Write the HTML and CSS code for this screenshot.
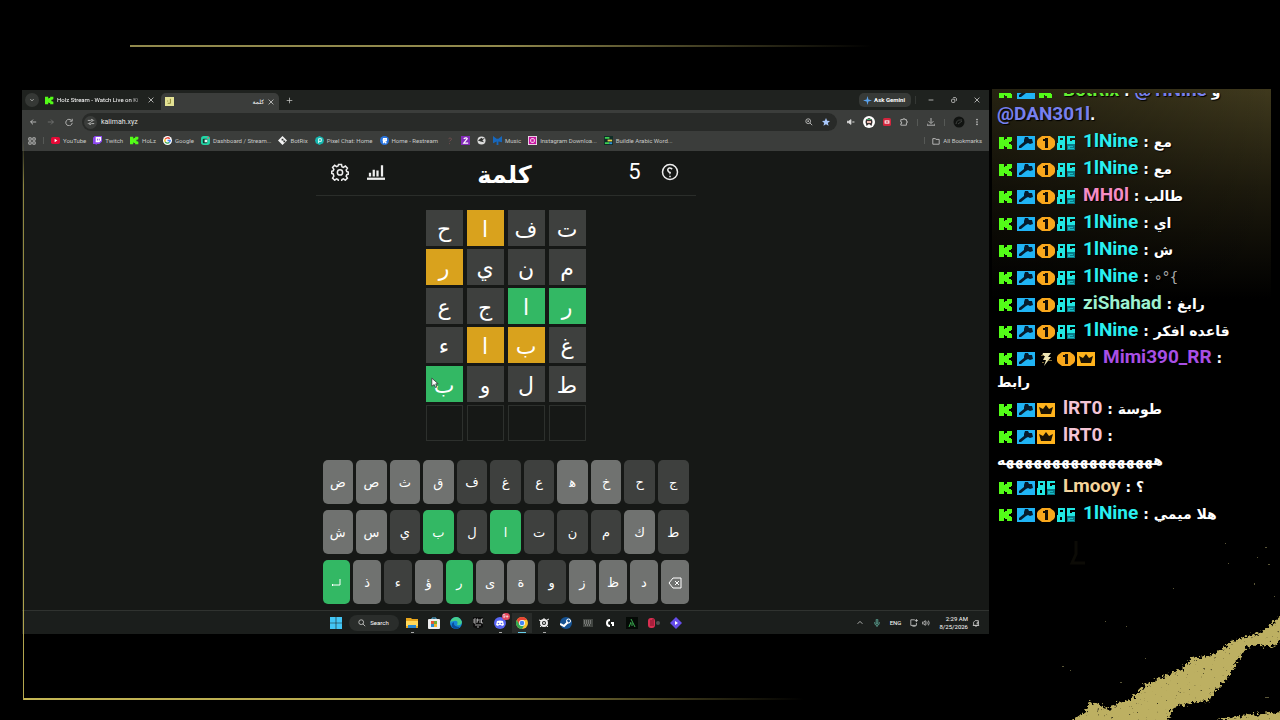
FILE: index.html
```html
<!DOCTYPE html>
<html lang="en">
<head>
  <meta charset="UTF-8" />
  <meta name="viewport" content="width=device-width, initial-scale=1" />
  <title>Holz Stream</title>
  <link rel="stylesheet" href="styles.css">
</head>
<body>

  <!-- Shared icons -->
  <svg class="defs" aria-hidden="true">
    <symbol id="k" viewBox="0 0 18 16"><path fill="#53fc18" d="M2 2h5v3h1V4h2V2h5v4h-1v1h-2v2h2v1h1v4h-5v-2H8v-1H7v3H2z"/></symbol>
    <symbol id="mod" viewBox="0 0 18 16"><path fill="#20b4f5" d="M0 1h18v14H0z"/><path fill="#061b2c" d="M8 2h3l1 2h3l1 4-3 1-2-1-2 1-5 4H2v-2l5-4V5z"/></symbol>
    <symbol id="one" viewBox="0 0 18 16"><path fill="#f9a71c" d="M5 1h8l4 3 1 2v4l-1 2-4 3H5l-4-3-1-2V6l1-2z"/><path fill="#171005" d="M6 4h2V3h3v10H8V6H6z"/></symbol>
    <symbol id="og" viewBox="0 0 18 16"><path fill="#21e6e2" fill-rule="evenodd" d="M1 1h7v7H1zM3 3v2h3V3zM0 8h8v7H0zM3 10v3h2v-3zM10 1h8v2h-5v3h2V5h3v4h-8z"/><path fill="#087e8b" d="M10 9h8v6h-8z"/><path fill="#18bbc4" d="M11 11h5v1h-3v1h4v1h-6z"/></symbol>
    <symbol id="crown" viewBox="0 0 18 16"><path fill="#ffb31c" d="M0 1h18v14H0z"/><path fill="#1b1202" d="M2 5l4 2 3-4 3 4 4-2-2 7H4z"/></symbol>
    <symbol id="bolt" viewBox="0 0 18 16"><path fill="#eee5b4" d="M6 2h8l-3 4h3l-7 9 2-6H6l2-4H5z"/><path fill="#806d39" d="M4 4h3v1H4zM11 9h4v1h-4zM5 11h2v1H5z"/></symbol>
    <symbol id="x" viewBox="0 0 10 10"><path d="M2 2l6 6M8 2L2 8"/></symbol>
  </svg>

  <div class="line-top"></div>
  <div class="frame"></div>
  <svg class="brush" viewBox="1000 520 280 200" aria-hidden="true">
    <filter id="rough" x="-10%" y="-10%" width="120%" height="120%">
      <feTurbulence type="fractalNoise" baseFrequency="0.35" numOctaves="3" seed="4" result="n"/>
      <feDisplacementMap in="SourceGraphic" in2="n" scale="10" xChannelSelector="R" yChannelSelector="G" result="d"/>
      <feColorMatrix in="n" values="0 0 0 0 0  0 0 0 0 0  0 0 0 0 0  -5 0 0 0 4.6" result="holes"/>
      <feComposite in="d" in2="holes" operator="in"/>
    </filter>
    <g filter="url(#rough)" fill="#bdb062">
      <path d="M1070 722l17-12 3-8 11 3 9 5 8-8 12-2 12-13 18-9 20-8 12-12 20-3 23-15 27-8 20-17v26l-12 6-12-3-12 4-6 8-5 10-10 15-10 10-7 10-18 2-15 4-10 16z"/>
      <path d="M1212 722l28-6 42-4v12z"/>
    </g>
    <g fill="#5a5637">
      <path d="M1225 543h1v1h-1zM1265 547h2v1h-2zM1257 557h1v1h-1zM1228 563h1v1h-1zM1268 564h2v1h-2zM1173 588h1v1h-1zM1105 621h1v1h-1zM1126 626h1v1h-1zM1274 596h1v1h-1zM1062 666h2v1h-2zM1070 670h1v1h-1zM1120 682h2v1h-2zM1145 658h1v1h-1zM1265 697h4v1h-4zM1254 583h1v2h-1z"/>
    </g>
    <path d="M1076 541v13l-4 9h13" fill="none" stroke="#0c0b06" stroke-width="3"/>
  </svg>

  <main class="stage">
    <div class="screen">

      <!-- Browser tabs -->
      <div class="tabstrip">
        <button class="tab-search" aria-label="Search tabs"><svg class="ico" viewBox="0 0 10 10"><path d="M3 4l2 2 2-2"/></svg></button>
        <div class="tab">
          <svg class="fav" viewBox="2 1 14 14"><use href="#k" width="18" height="16"/></svg>
          <span class="tab-title fade">Holz Stream - Watch Live on Ki</span>
          <button aria-label="Close tab"><svg class="ico"><use href="#x"/></svg></button>
        </div>
        <div class="tab active">
          <svg class="fav" viewBox="0 0 10 10"><path fill="#e3e294" d="M0 0h10v10H0z"/><path d="M6 2v5H3M3 4v1" fill="none" stroke="#827b2b"/></svg>
          <span class="tab-title" dir="rtl">كلمة</span>
          <button aria-label="Close tab"><svg class="ico"><use href="#x"/></svg></button>
        </div>
        <button aria-label="New tab"><svg class="ico plus" viewBox="0 0 10 10"><path d="M5 1v8M1 5h8"/></svg></button>
        <span class="spacer"></span>
        <button class="gemini"><svg class="fav" viewBox="0 0 10 10"><path fill="#5ba4ef" d="M5 0l1 4 4 1-4 1-1 4-1-4-4-1 4-1z"/></svg>Ask Gemini</button>
        <div class="window-controls">
          <button aria-label="Minimise"><svg class="ico" viewBox="0 0 10 10"><path d="M2 5h6"/></svg></button>
          <button aria-label="Restore"><svg class="ico" viewBox="0 0 10 10"><rect x="2" y="4" width="4" height="4" rx="1"/><path d="M4 2h3l1 1v3"/></svg></button>
          <button aria-label="Close"><svg class="ico"><use href="#x"/></svg></button>
        </div>
      </div>

      <!-- Address bar -->
      <div class="toolbar">
        <div class="nav">
          <button aria-label="Back"><svg class="ico" viewBox="0 0 10 10"><path d="M9 5H2M5 2L2 5l3 3"/></svg></button>
          <button aria-label="Forward"><svg class="ico dim" viewBox="0 0 10 10"><path d="M1 5h7M5 2l3 3-3 3"/></svg></button>
          <button aria-label="Reload"><svg class="ico" viewBox="0 0 10 10"><path d="M8 3a4 4 0 1 0 1 3M9 1v3H6"/></svg></button>
        </div>
        <div class="address">
          <span class="site"><svg class="ico" viewBox="0 0 10 10"><path d="M1 3h3M8 3h1M1 7h1M6 7h3"/><circle cx="6" cy="3" r="1.2"/><circle cx="4" cy="7" r="1.2"/></svg></span>
          <input type="text" value="kalimah.xyz" aria-label="Address">
          <svg class="ico" viewBox="0 0 10 10"><circle cx="4" cy="4" r="3"/><path d="M6 6l3 3M3 4h2M4 3v2"/></svg>
          <svg class="ico" viewBox="0 0 10 10"><path fill="#a8c7fa" stroke="none" d="M5 0l1.5 3.4 3.5.3-2.700 2.400.9 3.700L5 7.800 1.800 9.800l.9-3.700L0 3.700l3.500-.3z"/></svg>
        </div>
        <div class="extensions">
          <svg class="ico" viewBox="0 0 10 10"><path fill="#ddd" d="M0 4h2l3-2v6L2 6H0z"/><path d="M7 4l2 2M9 4L7 6"/></svg>
          <svg class="ext" viewBox="0 0 12 12"><circle cx="6" cy="6" r="6" fill="#fff"/><path fill="#3a3334" d="M2.500 6L3 3.500 6 2l3 1.500.5 2.500-1 4L6 8l-2.500 2z"/><path fill="#39a965" d="M4 3h4v1H4z"/><path fill="#eebbb0" d="M4 5h4v2H4z"/></svg>
          <svg class="ico" viewBox="0 0 10 10"><rect width="10" height="10" rx="2" fill="#d2253d" stroke="none"/><path fill="#fff" stroke="none" d="M2 3h6v4H2z"/><path d="M3 5h4M5 4v2" stroke="#d2253d"/></svg>
          <svg class="ico" viewBox="0 0 10 10"><path d="M1 2h3V1h2v1h2v2h1v2H8v3H1V7h1V5H1z"/></svg>
          <i class="sep"></i>
          <svg class="ico" viewBox="0 0 10 10"><path d="M5 0v6M2 4l3 3 3-3M0 7v2h10V7"/></svg>
          <i class="sep"></i>
          <svg class="ext" viewBox="0 0 12 12"><circle cx="6" cy="6" r="5.500" fill="#111311"/><path d="M3 8c1-4 2-4 6-4M5 8l4-3" stroke="#3f423f" fill="none"/></svg>
          <svg class="ico" viewBox="0 0 10 10"><g fill="#ccc" stroke="none"><circle cx="5" cy="2" r="1"/><circle cx="5" cy="5" r="1"/><circle cx="5" cy="8" r="1"/></g></svg>
        </div>
      </div>

      <!-- Bookmarks -->
      <nav class="bookmarks">
        <svg class="ico" viewBox="0 0 10 10"><path d="M1 1h3v3H1zM6 1h3v3H6zM1 6h3v3H1zM6 6h3v3H6z"/></svg>
        <i class="sep"></i>
        <a href="#"><svg class="fav" viewBox="0 0 10 10"><rect y="1" width="10" height="8" rx="2" fill="#e50936"/><path fill="#fff" d="M4 3l3 2-3 2z"/></svg>YouTube</a>
        <a href="#"><svg class="fav" viewBox="0 0 10 10"><path fill="#8c46ee" d="M0 2l2-2h8v6L7 9H5l-2 1V9H0z"/><path fill="#fff" d="M3 1h6v4L7 7H3z"/><path stroke="#8c46ee" d="M5 3v2M7 3v2"/></svg>Twitch</a>
        <a href="#"><svg class="fav" viewBox="2 1 14 14"><use href="#k" width="18" height="16"/></svg>HoLz</a>
        <a href="#"><svg class="fav" viewBox="0 0 10 10"><circle cx="5" cy="5" r="5" fill="#fff"/><g fill="none" stroke-width="1.500"><path d="M2.500 3.500A3 3 0 0 1 7.500 3.200" stroke="#ea4335"/><path d="M2.500 3.500a3 3 0 0 0 0 3" stroke="#fbbc05"/><path d="M2.500 6.500A3 3 0 0 0 7 7.200" stroke="#34a853"/><path d="M7 7.200A3 3 0 0 0 8 5H5" stroke="#4285f4"/></g></svg>Google</a>
        <a href="#"><svg class="fav" viewBox="0 0 10 10"><rect width="10" height="10" rx="3" fill="#21d5a5"/><rect x="2" y="3" width="5" height="5" rx="1" fill="#0d3b34"/><path fill="#dffcf3" d="M4 4h3v3H4z"/><circle cx="8" cy="2" r="1" fill="#e95c70"/></svg>Dashboard / Stream...</a>
        <a href="#"><svg class="fav" viewBox="0 0 10 10"><path fill="#f4f4f4" d="M5 0l5 5-5 5-5-5z"/><path fill="#303330" d="M4 3h2v2H4zM6 5h2v2H6z"/></svg>BotRix</a>
        <a href="#"><svg class="fav" viewBox="0 0 10 10"><path fill="#16b7b0" d="M5 0l4 2 1 3-1 3-4 2-4-2-1-3 1-3z"/><path fill="none" stroke="#e9fff9" d="M4 8V3h3v3H4"/></svg>Pixel Chat: Home</a>
        <a href="#"><svg class="fav" viewBox="0 0 10 10"><circle cx="5" cy="5" r="5" fill="#2874df"/><path fill="none" stroke="#fff" stroke-width="1.500" d="M4 8V3h3v2H4l3 3"/></svg>Home - Restream</a>
        <a href="#" aria-label="Question"><svg class="fav" viewBox="0 0 10 10"><path d="M4 3q3-2 3 1L5 6M5 8v1" fill="none" stroke="#785151"/></svg></a>
        <a href="#" aria-label="Two"><svg class="fav" viewBox="0 0 10 10"><path fill="#832bb9" d="M0 0h10v10H0z"/><path fill="none" stroke="#fff" stroke-width="1.300" d="M3 3q3-2 4 0L3 8h5"/></svg></a>
        <a href="#" aria-label="Globe"><svg class="fav" viewBox="0 0 10 10"><circle cx="5" cy="5" r="4.500" fill="#ddd"/><path fill="#30322f" d="M1 5l4-3 1 1 3-1-3 3 2 2-4-1z"/></svg></a>
        <a href="#"><svg class="fav" viewBox="0 0 10 10"><path fill="#1767bc" d="M0 0l4 3h2l4-3v7L6 6v4H4V6L0 8z"/></svg>Music</a>
        <a href="#"><svg class="fav" viewBox="0 0 10 10"><path fill="#eadfea" d="M0 0h10v10H0z"/><path fill="#c814a0" d="M1 1h8v8H1z"/><rect x="3" y="3" width="4" height="4" rx="1" fill="none" stroke="#fff"/></svg>Instagram Downloa...</a>
        <a href="#"><svg class="fav" viewBox="0 0 10 10"><path fill="#102d27" d="M0 0h10v10H0z"/><path fill="#3dcf50" d="M1 1h5v2H1zM1 7h5v2H1z"/><path fill="#e9d44d" d="M4 4h5v2H4z"/><path fill="#2f91de" d="M6 7h3v2H6z"/></svg>Buildle Arabic Word...</a>
        <span class="spacer"></span>
        <i class="sep"></i>
        <a href="#"><svg class="ico" viewBox="0 0 10 10"><path d="M1 2h3l1 1h4v6H1z"/></svg>All Bookmarks</a>
      </nav>

      <!-- Game -->
      <section class="game">
        <header class="game-header">
          <div class="tools">
            <button aria-label="Settings"><svg viewBox="0 0 24 24"><path d="M10 2h4l.6 3 1.900.8 2.600-1.700 2.800 2.800-1.700 2.600.8 1.900 2 .6v3l-2 .6-.8 1.900 1.700 2.600-2.800 2.800-2.600-1.700-1.900.8-.6 3h-4l-.6-3-1.900-.8-2.600 1.700-2.800-2.800 1.700-2.600L3 14.600l-2-.6v-3l2-.6.8-1.900L2.100 5.900l2.800-2.800 2.600 1.700 1.900-.8z"/><circle cx="12" cy="12.500" r="3.500"/></svg></button>
            <button aria-label="Statistics"><svg viewBox="0 0 24 24"><path d="M0 21h24" stroke-width="3"/><path d="M4 18v-5M9 18V9M14 18v-8M20 18V3" stroke-width="3"/></svg></button>
          </div>
          <h1 lang="ar" dir="rtl">كلمة</h1>
          <div class="tools end">
            <span class="streak">5</span>
            <button aria-label="Help"><svg viewBox="0 0 24 24"><circle cx="12" cy="12" r="10"/><path d="M15 8q-5-3-6 1 0 3 4 4-2 0-1 2M12 17v2"/></svg></button>
          </div>
        </header>

        <div class="board" lang="ar" dir="rtl">
          <div class="tile absent">ت</div><div class="tile absent">ف</div><div class="tile present">ا</div><div class="tile absent">ح</div>
          <div class="tile absent">م</div><div class="tile absent">ن</div><div class="tile absent">ي</div><div class="tile present">ر</div>
          <div class="tile correct">ر</div><div class="tile correct">ا</div><div class="tile absent">ج</div><div class="tile absent">ع</div>
          <div class="tile absent">غ</div><div class="tile present">ب</div><div class="tile present">ا</div><div class="tile absent">ء</div>
          <div class="tile absent">ط</div><div class="tile absent">ل</div><div class="tile absent">و</div>
          <div class="tile correct">ب<svg class="cursor" viewBox="0 0 10 14"><path fill="#fff" stroke="#333" d="M1 1v10l3-2 2 4 1-1-1-4h3z"/></svg></div>
          <div class="tile"></div><div class="tile"></div><div class="tile"></div><div class="tile"></div>
        </div>

        <div class="keyboard" lang="ar">
          <div class="key-row">
            <button>ض</button><button>ص</button><button>ث</button><button>ق</button><button class="absent">ف</button><button class="absent">غ</button><button class="absent">ع</button><button>ه&zwj;</button><button>خ</button><button class="absent">ح</button><button class="absent">ج</button>
          </div>
          <div class="key-row">
            <button>ش</button><button>س</button><button class="absent">ي</button><button class="correct">ب</button><button class="absent">ل</button><button class="correct">ا</button><button class="absent">ت</button><button class="absent">ن</button><button class="absent">م</button><button>ك</button><button class="absent">ط</button>
          </div>
          <div class="key-row">
            <button class="correct" aria-label="Enter"><svg viewBox="0 0 14 14"><path d="M11 3v6H3M4 8L3 9l1 1"/></svg></button><button>ذ</button><button class="absent">ء</button><button>ؤ</button><button class="correct">ر</button><button>ى</button><button>ة</button><button class="absent">و</button><button>ز</button><button>ظ</button><button>د</button><button aria-label="Delete"><svg viewBox="0 0 14 14"><path d="M5 2h8v10H5L1 7zM7 5l4 4M11 5L7 9"/></svg></button>
          </div>
        </div>
      </section>

      <!-- Taskbar -->
      <footer class="taskbar">
        <div class="apps">
          <button aria-label="Start"><svg viewBox="0 0 12 12"><path fill="#43c6f5" d="M0 0h5.700v5.700H0zM6.300 0H12v5.700H6.300zM0 6.300h5.700V12H0zM6.300 6.300H12V12H6.300z"/></svg></button>
          <button class="search"><svg class="ico" viewBox="0 0 10 10"><circle cx="4" cy="4" r="3"/><path d="M6 6l3 3"/></svg>Search</button>
          <button class="open" aria-label="Explorer"><svg viewBox="0 0 12 12"><path fill="#e7a51c" d="M0 1h5l1 1h6v9H0z"/><path fill="#ffd85a" d="M0 4h12v5H0z"/><path fill="#2686d0" d="M2 8h8v3H2z"/></svg></button>
          <button aria-label="Store"><svg viewBox="0 0 12 12"><path fill="none" stroke="#59b9e8" d="M4 3V1h4v2"/><rect y="2" width="12" height="10" rx="1" fill="#eee"/><path fill="#e35935" d="M3 4h3v3H3z"/><path fill="#73ad32" d="M6 4h3v3H6z"/><path fill="#2a8cd1" d="M3 7h3v3H3z"/><path fill="#f0b52b" d="M6 7h3v3H6z"/></svg></button>
          <button aria-label="Edge"><svg viewBox="0 0 12 12"><circle cx="6" cy="6" r="6" fill="#1684d6"/><path fill="#45cf8d" d="M3 1q6-3 9 4-1 4-5 3 2-5-3-4-3 0-4 2 0-3 3-5z"/><path fill="#0a4d9a" d="M4 5q-1 5 6 5-4 4-8 0-1-4 2-5z"/></svg></button>
          <button aria-label="Epic Games"><svg viewBox="0 0 12 12"><path fill="#0d0d0d" d="M1 0h10v10l-5 2-5-2z"/><path fill="none" stroke="#ccc" stroke-width=".8" d="M4 2H2v4h2M2 4h2M5 6V2h1v2H5M8 2v4M11 2H9.500v4H11M3 8h6M5 10h2"/></svg></button>
          <button class="open" aria-label="Discord"><svg viewBox="0 0 12 12"><circle cx="6" cy="6" r="6" fill="#5865f2"/><path fill="#fff" d="M3 4q3-1 6 0l1 4-2 1-1-1H5L4 9 2 8z"/><circle cx="4.500" cy="6.500" r=".8" fill="#5865f2"/><circle cx="7.500" cy="6.500" r=".8" fill="#5865f2"/></svg><span class="count">9+</span></button>
          <button class="open current" aria-label="Chrome"><svg viewBox="0 0 12 12"><circle cx="6" cy="6" r="6" fill="#f9c42c"/><path fill="#e84435" d="M.8 3a6 6 0 0 1 10.400 0H6L3.400 7.500z"/><path fill="#33a853" d="M.8 3a6 6 0 0 0 5.200 9l2.600-4.500H3.400z"/><circle cx="6" cy="6" r="3" fill="#fff"/><circle cx="6" cy="6" r="2.300" fill="#4285f4"/></svg></button>
          <button class="open" aria-label="SteelSeries"><svg viewBox="0 0 12 12"><g fill="none" stroke="#eee"><circle cx="6" cy="6" r="3" stroke-width="2"/><path d="M6 1v2M1 3l3 1M9 3l2-1M2 10l2-2M9 9l1 1"/></g><circle cx="6" cy="6" r="1" fill="#eee"/></svg></button>
          <button aria-label="Steam"><svg viewBox="0 0 12 12"><circle cx="6" cy="6" r="6" fill="#155293"/><path d="M0 7l4 2 4-4" fill="none" stroke="#fff" stroke-width="2"/><circle cx="8.500" cy="4" r="2" fill="none" stroke="#fff"/></svg></button>
          <button aria-label="Keyboard"><svg viewBox="0 0 12 12"><path fill="#414541" d="M1 2h10v8H1z"/><path d="M2 4h8M2 6h8M3 8h6" stroke="#aaa" stroke-dasharray="1 1"/></svg></button>
          <button aria-label="Logitech"><svg viewBox="0 0 12 12"><path d="M6 3Q3 3 3 6t3 3M7 6h2v3" fill="none" stroke="#fff" stroke-width="2"/></svg></button>
          <button aria-label="Arc"><svg viewBox="0 0 12 12"><path fill="#050a06" d="M0 0h12v12H0z"/><path d="M3 10l2-5M5 2l4 8M6 6v3" fill="none" stroke="#3aae50"/></svg></button>
          <button aria-label="Recorder"><svg viewBox="0 0 12 12"><rect y="1" width="7" height="10" rx="3" fill="#d92f51"/><path d="M3 3v6M5 2v7" stroke="#781229"/><circle cx="10" cy="6" r="2" fill="#4e5150"/></svg></button>
          <button aria-label="Player"><svg viewBox="0 0 12 12"><path fill="#654ce9" d="M6 0l6 6-6 6-6-6z"/><path fill="#fff" d="M5 4l3 2-3 2z"/></svg></button>
        </div>
        <div class="tray">
          <svg class="ico" viewBox="0 0 10 10"><path d="M2 6l3-3 3 3"/></svg>
          <svg class="ico mic" viewBox="0 0 10 10"><rect x="4" y="0" width="2" height="6" rx="1"/><path d="M2 4q0 4 3 4t3-4M5 8v2"/></svg>
          <span class="lang">ENG</span>
          <div class="tray-pair">
            <svg class="ico" viewBox="0 0 10 10"><path d="M6 1H1v7h7V5M3 9h4M8 0v4M6 2h4"/></svg>
            <svg class="ico" viewBox="0 0 10 10"><path d="M0 4h2l2-2v6L2 6H0zM6 3q1 2 0 4M8 2q2 3 0 6"/></svg>
          </div>
          <div class="clock">2:29 AM<br>8/25/2026</div>
          <svg class="ico" viewBox="0 0 10 10"><path d="M2 8V4l2-2h4v6zM1 8h8M4 9h2M6 4h2L6 6h2"/></svg>
        </div>
      </footer>
    </div>

    <!-- Chat overlay -->
    <aside class="chat">
      <div class="messages">
        <p><svg><use href="#k"/></svg><svg><use href="#mod"/></svg><svg><use href="#k"/></svg><b class="green">BotRix</b> : <b class="blue mention">@1lNine</b> و<br><b class="blue mention">@DAN301l</b>.</p>
        <p><svg><use href="#k"/></svg><svg><use href="#mod"/></svg><svg><use href="#one"/></svg><svg><use href="#og"/></svg><b class="cyan">1lNine</b> : مع</p>
        <p><svg><use href="#k"/></svg><svg><use href="#mod"/></svg><svg><use href="#one"/></svg><svg><use href="#og"/></svg><b class="cyan">1lNine</b> : مع</p>
        <p><svg><use href="#k"/></svg><svg><use href="#mod"/></svg><svg><use href="#one"/></svg><svg><use href="#og"/></svg><b class="pink">MH0l</b> : طالب</p>
        <p><svg><use href="#k"/></svg><svg><use href="#mod"/></svg><svg><use href="#one"/></svg><svg><use href="#og"/></svg><b class="cyan">1lNine</b> : اي</p>
        <p><svg><use href="#k"/></svg><svg><use href="#mod"/></svg><svg><use href="#one"/></svg><svg><use href="#og"/></svg><b class="cyan">1lNine</b> : ش</p>
        <p><svg><use href="#k"/></svg><svg><use href="#mod"/></svg><svg><use href="#one"/></svg><svg><use href="#og"/></svg><b class="cyan">1lNine</b> : <span class="face">∘°{</span></p>
        <p><svg><use href="#k"/></svg><svg><use href="#mod"/></svg><svg><use href="#one"/></svg><svg><use href="#og"/></svg><b class="mint">ziShahad</b> : رابغ</p>
        <p><svg><use href="#k"/></svg><svg><use href="#mod"/></svg><svg><use href="#one"/></svg><svg><use href="#og"/></svg><b class="cyan">1lNine</b> : قاعده افكر</p>
        <p><svg><use href="#k"/></svg><svg><use href="#mod"/></svg><svg><use href="#bolt"/></svg><svg><use href="#one"/></svg><svg><use href="#crown"/></svg><b class="purple">Mimi390_RR</b> :<br>رابط</p>
        <p><svg><use href="#k"/></svg><svg><use href="#mod"/></svg><svg><use href="#crown"/></svg><b class="rose">lRT0</b> : طوسة</p>
        <p><svg><use href="#k"/></svg><svg><use href="#mod"/></svg><svg><use href="#crown"/></svg><b class="rose">lRT0</b> :<br>هههههههههههههههههه</p>
        <p><svg><use href="#k"/></svg><svg><use href="#mod"/></svg><svg><use href="#og"/></svg><b class="sand">Lmooy</b> : ؟</p>
        <p><svg><use href="#k"/></svg><svg><use href="#mod"/></svg><svg><use href="#one"/></svg><svg><use href="#og"/></svg><b class="cyan">1lNine</b> : هلا ميمي</p>
      </div>
    </aside>
  </main>

</body>
</html>
```

FILE: styles.css
```css
* {
  box-sizing: border-box;
}

body {
  position: relative;
  margin: 0;
  min-height: 100vh;
  background: #000;
  color: #fff;
  font-family: Roboto, "DejaVu Sans", sans-serif;
  overflow: hidden;
}

button {
  display: flex;
  align-items: center;
  justify-content: center;
  padding: 0;
  border: none;
  background: none;
  color: inherit;
  font: inherit;
  cursor: pointer;
}

svg {
  flex: none;
}

.defs {
  position: absolute;
  width: 0;
  height: 0;
}

/* Overlay artwork */
.line-top {
  position: absolute;
  top: 45px;
  left: 130px;
  width: 58%;
  height: 2px;
  background: linear-gradient(to right, #91894d, #91894d 50%, transparent);
}

.frame {
  position: absolute;
  z-index: 1;
  top: 140px;
  bottom: 20px;
  left: 23px;
  width: 61%;
  pointer-events: none;
  background:
    linear-gradient(to bottom, transparent, #8d8540 8%, #b5a84f) left / 1px 100% no-repeat,
    linear-gradient(to right, #c5b755, #b5a84f 50%, transparent) bottom / 100% 2px no-repeat;
}

.brush {
  position: absolute;
  right: 0;
  bottom: 0;
  width: 280px;
  height: 200px;
}

.stage {
  display: grid;
  grid-template-columns: 1fr 279px;
  gap: 3px;
  align-items: start;
  padding: 89px 9px 0 22px;
}

/* Browser */
.screen {
  margin-top: 1px;
  background: #161816;
  font-size: 6px;
  line-height: 10px;
}

.ico {
  width: 8px;
  height: 8px;
  fill: none;
  stroke: #d0d1cf;
  stroke-width: 1;
}

.dim {
  opacity: 0.4;
}

.fav {
  width: 9px;
  height: 9px;
}

.spacer {
  flex: 1;
}

.sep {
  width: 1px;
  height: 7px;
  background: #565956;
}

.tabstrip {
  display: flex;
  align-items: center;
  height: 20px;
  padding: 0 4px 0 3px;
  background: #1f221f;
}

.tab-search {
  width: 14px;
  height: 14px;
  border-radius: 50%;
  background: #353835;
}

.tab {
  display: flex;
  align-items: center;
  gap: 3px;
  width: 118px;
  height: 14px;
  padding: 0 2px 0 6px;
}

.tab.active {
  height: 17px;
  margin: 3px 7px 0 4px;
  padding: 0 4px;
  border-radius: 5px 5px 0 0;
  background: #3b3d3b;
}

.tab-title {
  flex: 1;
  overflow: hidden;
  white-space: nowrap;
}

.fade {
  -webkit-mask-image: linear-gradient(to right, #000 85%, transparent);
  mask-image: linear-gradient(to right, #000 85%, transparent);
}

.plus {
  width: 7px;
  height: 7px;
}

.gemini {
  gap: 2px;
  height: 14px;
  padding: 0 6px 0 4px;
  border-radius: 5px;
  background: #373a37;
  font-weight: bold;
}

.window-controls {
  display: flex;
  gap: 15px;
  margin-left: 4px;
  padding: 0 4px 0 11px;
  border-left: 1px solid #343734;
}

.toolbar {
  display: flex;
  align-items: center;
  height: 22px;
  padding: 2px 8px 0 7px;
  background: #3b3d3b;
}

.nav {
  display: flex;
  gap: 10px;
}

.address {
  display: flex;
  flex: 1;
  align-items: center;
  gap: 9px;
  height: 18px;
  margin: 0 10px 0 9px;
  padding: 0 7px 0 2px;
  border-radius: 9px;
  background: #282a28;
}

.site {
  display: flex;
  align-items: center;
  justify-content: center;
  width: 13px;
  height: 13px;
  border-radius: 50%;
  background: #3b3d3b;
}

.address input {
  flex: 1;
  min-width: 0;
  margin-left: -5px;
  padding: 0;
  border: none;
  outline: none;
  background: none;
  color: #e4e5e3;
  font: 7px Roboto, sans-serif;
}

.extensions {
  display: flex;
  align-items: center;
  gap: 9px;
}

.ext {
  width: 12px;
  height: 12px;
  margin: 0 -1px;
}

.bookmarks {
  display: flex;
  align-items: center;
  gap: 7px;
  height: 19px;
  padding: 0 7px 2px 6px;
  background: #3b3d3b;
  white-space: nowrap;
}

.bookmarks a {
  display: flex;
  align-items: center;
  gap: 3px;
  color: #c9cac8;
  text-decoration: none;
}

/* Game */
.game {
  display: flex;
  flex-direction: column;
  align-items: center;
  padding-bottom: 6px;
}

.game-header {
  display: grid;
  grid-template-columns: 1fr auto 1fr;
  align-items: center;
  width: 380px;
  height: 45px;
  padding: 0 17px 0 15px;
  border-bottom: 1px solid #2a2d2a;
}

.tools {
  display: flex;
  align-items: center;
  gap: 18px;
  padding-bottom: 2px;
}

.tools.end {
  justify-content: flex-end;
  gap: 20px;
}

.tools svg {
  width: 18px;
  height: 18px;
  fill: none;
  stroke: #eee;
  stroke-width: 2;
}

.streak {
  font: 22px/24px Roboto, sans-serif;
}

h1 {
  margin: 0;
  padding-top: 3px;
  font: bold 24px/40px "DejaVu Sans", sans-serif;
}

.board {
  display: grid;
  grid-template-columns: repeat(4, 37px);
  grid-auto-rows: 36px;
  gap: 3px 4px;
  margin: 14px 0 19px;
}

.tile {
  position: relative;
  padding-top: 2px;
  border: 1px solid #2d302d;
  font: 22px/34px "DejaVu Sans", sans-serif;
  text-align: center;
}

.tile.absent,
.key-row .absent {
  border-color: #3e403e;
  background: #3e403e;
}

.tile.present {
  border-color: #d9a21d;
  background: #d9a21d;
}

.tile.correct,
.key-row .correct {
  border-color: #33b864;
  background: #33b864;
}

.cursor {
  position: absolute;
  top: 10px;
  left: 4px;
  width: 8px;
  height: 12px;
}

.keyboard {
  display: grid;
  gap: 6px;
  width: 366px;
}

.key-row {
  display: flex;
  gap: 3px;
}

.key-row button {
  flex: 1;
  height: 44px;
  padding-top: 2px;
  border-radius: 5px;
  background: #707270;
  font: 13px/20px "DejaVu Sans", sans-serif;
}

.key-row svg {
  width: 14px;
  height: 14px;
  fill: none;
  stroke: #fff;
}

/* Taskbar */
.taskbar {
  display: grid;
  grid-template-columns: 1fr auto 1fr;
  align-items: center;
  height: 24px;
  border-top: 1px solid #303330;
  background: #1b1e1c;
}

.apps {
  display: flex;
  grid-column: 2;
  gap: 2px;
}

.apps button {
  position: relative;
  width: 20px;
  height: 20px;
}

.apps svg {
  width: 12px;
  height: 12px;
}

.apps .search {
  gap: 4px;
  width: 50px;
  height: 16px;
  margin: 2px 1px;
  border-radius: 8px;
  background: #2a2d2b;
  font-size: 6px;
}

.apps .ico {
  width: 8px;
  height: 8px;
}

.apps .open::after {
  position: absolute;
  bottom: 0;
  left: 9px;
  width: 3px;
  height: 1px;
  background: #aaa;
  content: "";
}

.apps .current {
  background: #292c2a;
}

.apps .current::after {
  left: 6px;
  width: 8px;
  background: #67cde9;
}

.count {
  position: absolute;
  top: 0;
  right: 0;
  padding: 0 1px;
  border-radius: 4px;
  background: #e0455c;
  font-size: 5px;
  line-height: 7px;
}

.tray {
  display: flex;
  align-items: center;
  justify-content: flex-end;
  gap: 9px;
  padding-right: 9px;
}

.tray .mic {
  stroke: #67b9a7;
}

.tray-pair {
  display: flex;
  gap: 4px;
}

.clock {
  margin-right: -5px;
  font-size: 6px;
  line-height: 8px;
  text-align: right;
}

/* Chat */
.chat {
  padding: 4px 0 0 5px;
  background:
    linear-gradient(to right, rgba(0, 0, 0, 0.4), transparent),
    linear-gradient(to bottom, #3f391d, #1d1a0d 100px, #000 210px);
}

.messages {
  display: flex;
  flex-direction: column;
  justify-content: flex-end;
  height: 436px;
  overflow: hidden;
}

.messages p {
  flex: none;
  margin: 0 0 3px;
  font: bold 14px/24px "DejaVu Sans", sans-serif;
  white-space: nowrap;
  text-shadow: 1px 1px 1px #000;
}

.messages svg {
  width: 18px;
  height: 16px;
  margin-right: 2px;
  vertical-align: -4px;
}

.messages b {
  margin-left: 6px;
  font: bold 19px/20px Roboto, sans-serif;
}

.messages .mention {
  margin-left: 0;
}

.messages .face {
  color: #aaa;
  font-weight: normal;
}

.cyan { color: #29eff0; }
.pink { color: #f58cc5; }
.mint { color: #9df0d1; }
.purple { color: #a84fe5; }
.rose { color: #f4c4d5; }
.sand { color: #f5d49b; }
.green { color: #63ef32; }
.blue { color: #7780ef; }
```
